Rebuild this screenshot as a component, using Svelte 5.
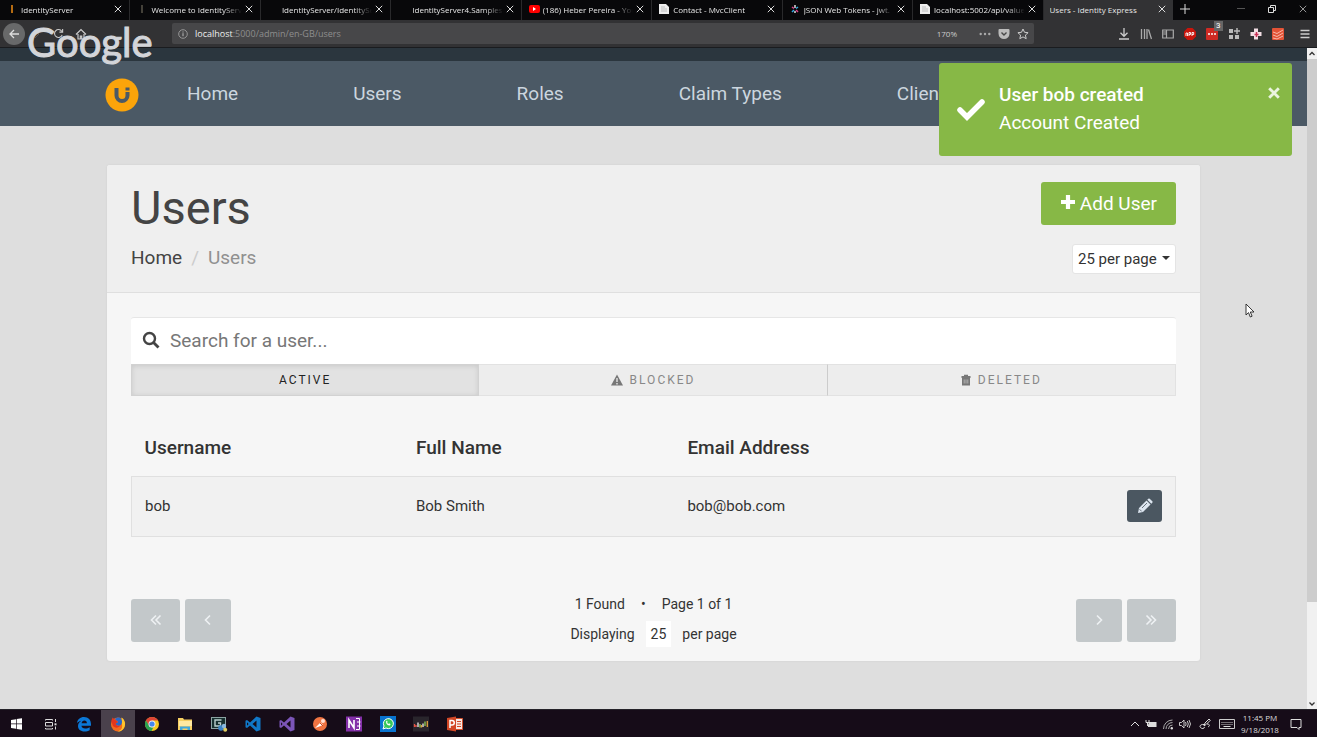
<script>
  const tabs = [
    { title: 'IdentityServer', icon: 'bar' },
    { title: 'Welcome to IdentityServ', icon: 'faint' },
    { title: 'IdentityServer/IdentitySe', icon: 'blank' },
    { title: 'IdentityServer4.Samples', icon: 'blank' },
    { title: '(186) Heber Pereira - You', icon: 'video' },
    { title: 'Contact - MvcClient', icon: 'page' },
    { title: 'JSON Web Tokens - jwt.', icon: 'jwt' },
    { title: 'localhost:5002/api/value', icon: 'page' },
    { title: 'Users - Identity Express', icon: '', active: true }
  ];
  const links = ['Home', 'Users', 'Roles', 'Claim Types', 'Clients'];
  const apps = [
    'Start', 'Task View', 'Edge', 'Firefox', 'Chrome', 'Explorer', 'Capture', 'VS Code',
    'Visual Studio', 'Postman', 'OneNote', 'WhatsApp', 'Monitor', 'PowerPoint'
  ];
  const users = [{ username: 'bob', name: 'Bob Smith', email: 'bob@bob.com' }];
  let filter = $state('active');
  let toastOpen = $state(true);
</script>

{#snippet cross(size, width)}
  <svg width={size} height={size} viewBox="0 0 10 10" aria-hidden="true">
    <path d="M1 1l8 8M9 1l-8 8" stroke="currentColor" stroke-width={width} fill="none" />
  </svg>
{/snippet}

{#snippet appIcon(name)}
  <svg width="18" height="18" viewBox="0 0 18 18" aria-hidden="true">
    {#if name === 'Start'}
      <path fill="#fff" d="M3 5l5-.8v4.4H3zM8.700 4.100L14 3.300v5.300H8.700zM3 9.300h5v4.500L3 13zM8.700 9.300H14v5.400l-5.300-.8z" />
    {:else if name === 'Task View'}
      <path d="M3.500 5.500v-1h7v1M3.500 13v1h7v-1M3.500 7.500h7v3.500h-7zM13.500 4v3M13.500 11.500v3" stroke="#ddd" fill="none" />
      <rect x="12.500" y="8.300" width="2" height="2" fill="#ddd" />
    {:else if name === 'Edge'}
      <path fill="#0b78d7" d="M2 8.200C2.400 4.300 5.200 2 9 2c4.400 0 7 3 7 7.300v1.500H6.500c.1 1.900 1.600 2.700 3.600 2.700 1.700 0 3.300-.5 4.600-1.300v3.100c-1.300.8-3.200 1.200-5.200 1.200C5.500 16.500 3 14.200 3 11c0-2.300 1.200-4.200 3.400-5.300C4.500 6 3 6.900 2 8.200zM6.600 8.200h5.300C11.900 6.400 11 5.500 9.400 5.500c-1.500 0-2.500 1-2.800 2.700z" />
    {:else if name === 'Firefox'}
      <circle cx="9" cy="9.500" r="7" fill="#f36a1c" />
      <path fill="#ffc42b" d="M12.500 2.500c3.300 2 4.300 6 3.200 9-1 3-4 5.500-7.300 5 4-1 5-3.600 4.700-6.400 0-2-.9-5-.6-7.600z" />
      <path fill="#2868c8" d="M6 4c2-2.200 5.600-2 6.500.4 1 2.200.5 5-1.500 6-2 .8-4-.2-4.400-2l2.600-1.300C8.200 6 7 5.500 6 4z" />
      <path fill="#e3361e" d="M2.200 6L3.600 2.600l2 2L9 6.900 6.700 8.500c.2 2 2.500 3 4.500 2-1.300 2.800-5.800 2.900-7.400 0z" />
    {:else if name === 'Chrome'}
      <circle cx="9" cy="9" r="7" fill="#f7c922" />
      <path fill="#de4436" d="M2.900 5.600A7 7 0 0 1 15.100 5.600H9L5.900 10.800z" />
      <path fill="#27a150" d="M2.900 5.600l3.300 5.200c1 1.400 2.700 1.900 4.200 1.400L8.500 16A7 7 0 0 1 2.900 5.600z" />
      <circle cx="9" cy="9" r="3.500" fill="#eee" /><circle cx="9" cy="9" r="2.600" fill="#4487ef" />
    {:else if name === 'Explorer'}
      <path fill="#f6cf62" d="M2 3h5l1 1.500h8V15H2z" /><path fill="#ffe9a1" d="M3 6h13v5H3z" />
      <path fill="#40a9df" d="M4 11.500h10V15h-2.500v-1.500h-5V15H4z" />
    {:else if name === 'Capture'}
      <rect x="1.500" y="2.500" width="14" height="11" fill="#17302f" stroke="#8ba3a2" />
      <path d="M11.500 5H5v6h5.500V8H8" fill="none" stroke="#bcd0cf" stroke-width="1.400" />
      <circle cx="11" cy="13" r="2.800" fill="#3b83c4" /><circle cx="14" cy="11" r="2.200" fill="#8bb9de" /><circle cx="15.200" cy="14.800" r="2" fill="#e1ce62" />
    {:else if name === 'VS Code' || name === 'Visual Studio'}
      <path fill={name === 'VS Code' ? '#1078c8' : '#7b55b8'} fill-rule="evenodd" d="M12.500 1.500L16.500 3v12l-4 1.500L6 10.500 3 13l-1.500-.8V5.800L3 5l3 2.500zM12.500 5.500L8.500 9l4 3.500zM3 7.300v3.400L4.600 9z" />
    {:else if name === 'Postman'}
      <circle cx="9" cy="9" r="7" fill="#f07442" />
      <path d="M4 13l5.500-5.500L12 10l-5 2z" fill="#fff" /><circle cx="12" cy="6" r="2" fill="#ffe0d2" /><path d="M9 8l3 3" stroke="#c64b22" />
    {:else if name === 'OneNote'}
      <rect x="1" y="1.500" width="16" height="15" fill="#832fa8" />
      <path d="M4 13V5l5 8V5" fill="none" stroke="#fff" stroke-width="1.600" /><path d="M11 3.500h3.500v11H11M12 7h3.500M12 11h3.500" stroke="#fff" fill="none" />
    {:else if name === 'WhatsApp'}
      <rect x="1" y="1" width="16" height="16" fill="#0873cf" />
      <path d="M4 14l1-3a5 5 0 1 1 2 2z" fill="#37c95a" stroke="#fff" /><path d="M7 6.500c0 2.500 1.500 4 4 4l.5-1.500-1.500-.7-.7.700-1.200-1.200.5-.8L8 5.500z" fill="#fff" />
    {:else if name === 'Monitor'}
      <rect x="1" y="1.500" width="16" height="15" fill="#29252c" />
      <path d="M2.500 9v3M4 10v2" stroke="#e65144" stroke-width="1.300" /><path d="M6 7.500v4.500M11 8.500V12" stroke="#eee" stroke-width="1.300" /><path d="M8 9v3.500M13 6.500V11" stroke="#8dcb55" stroke-width="1.300" /><path d="M9.500 10v2.500M15.300 6v6" stroke="#e0a23d" stroke-width="1.300" />
    {:else}
      <path fill="#f9e9e4" stroke="#d4502d" d="M8 3.500h8.500v11H8z" /><path fill="#d24625" d="M1 3l9-1.500v15L1 15z" />
      <path d="M4 13V5.500h2a1.800 1.800 0 0 1 0 4.500H4" stroke="#fff" stroke-width="1.500" fill="none" /><path d="M11 6.500h4M11 9h4M11 11.500h4" stroke="#d24625" />
    {/if}
  </svg>
{/snippet}

<div class="screen">
  <div class="tabbar">
    {#each tabs as tab}
      <div class="tab" class:active={tab.active}>
        {#if tab.icon}
          <svg width="12" height="12" viewBox="0 0 12 12" aria-hidden="true">
            {#if tab.icon === 'bar'}<path d="M6 2v8" stroke="#ef8c14" stroke-width="1.500" />
            {:else if tab.icon === 'faint'}<path d="M6 2v8" stroke="#59544a" stroke-width="1.500" />
            {:else if tab.icon === 'video'}<rect x="1" y="2" width="11" height="8" rx="2" fill="#f00" /><path d="M5 4l3 2-3 2z" fill="#fff" />
            {:else if tab.icon === 'page'}<path d="M1 1h7l3 3v7H1z" fill="#eee" /><path d="M3 4h4M3 6h6M3 8h6" stroke="#aaa" stroke-width=".7" />
            {:else if tab.icon === 'jwt'}<path d="M6 2v3M6 8v2" stroke="#ddd" stroke-width="1.500" /><path d="M3 4l2 1.500M7 7l2 2" stroke="#e0418a" stroke-width="1.500" /><path d="M9 4L7 5.500M5 7L3 9" stroke="#31a9e0" stroke-width="1.500" />{/if}
          </svg>
        {/if}
        <span class="tab-title">{tab.title}</span>
        <button class="bare" aria-label="Close tab">{@render cross(8, 1.2)}</button>
      </div>
    {/each}
    <div class="window-controls">
      <button class="bare" aria-label="New tab"><svg width="12" height="12" viewBox="0 0 12 12"><path d="M6 1v10M1 6h10" stroke="#ddd" /></svg></button>
      <span class="spacer"></span>
      <button class="bare" aria-label="Minimize"><svg width="8" height="8" viewBox="0 0 8 8"><path d="M0 3.500h8" stroke="#555" /></svg></button>
      <button class="bare" aria-label="Restore"><svg width="8" height="8" viewBox="0 0 8 8"><path d="M.5 2.500h5v5h-5zM2.500 2V.5h5v5H6" stroke="#ddd" fill="none" /></svg></button>
      <button class="bare" aria-label="Close window">{@render cross(8, 0.8)}</button>
    </div>
  </div>

  <div class="toolbar">
    <div class="history">
      <button class="bare back" aria-label="Back"><svg width="12" height="12" viewBox="0 0 12 12"><path d="M11 6H2M6 2L2 6l4 4" stroke="#ddd" stroke-width="1.300" fill="none" /></svg></button>
      <button class="bare" aria-label="Forward"><svg width="10" height="10" viewBox="0 0 10 10"><path d="M3 1l4 4-4 4" stroke="#555" fill="none" /></svg></button>
      <button class="bare" aria-label="Reload"><svg width="11" height="11" viewBox="0 0 12 12"><path d="M10 7.500A4.300 4.300 0 1 1 9.500 3.500M10.500 1v3.500H7" stroke="#ccc" stroke-width="1.200" fill="none" /></svg></button>
      <button class="bare" aria-label="Home page"><svg width="12" height="12" viewBox="0 0 12 12"><path d="M1 6.500L6 1.500l5 5M3 6v5h6V6M5.300 11V8h1.400v3" stroke="#ccc" stroke-width="1.200" fill="none" /></svg></button>
    </div>
    <div class="address">
      <svg width="10" height="10" viewBox="0 0 10 10" aria-hidden="true"><circle cx="5" cy="5" r="4.300" stroke="#aaa" fill="none" stroke-width=".8" /><path d="M5 4.200v3M5 2.500v1" stroke="#bbb" /></svg>
      <span class="url"><b>localhost</b>:5000/admin/en-GB/users</span>
      <span class="zoom">170%</span>
      <svg width="12" height="12" viewBox="0 0 12 12" aria-hidden="true"><g fill="#aaa"><circle cx="1.700" cy="6" r="1.200" /><circle cx="6" cy="6" r="1.200" /><circle cx="10.300" cy="6" r="1.200" /></g></svg>
      <svg width="12" height="12" viewBox="0 0 12 12" aria-hidden="true"><path fill="#bbb" d="M1.500 1h9a1 1 0 0 1 1 1v3.500a5.500 5.500 0 0 1-11 0V2a1 1 0 0 1 1-1z" /><path d="M3.500 4.500L6 7l2.500-2.500" stroke="#474747" stroke-width="1.400" fill="none" /></svg>
      <svg width="12" height="12" viewBox="0 0 12 12" aria-hidden="true"><path d="M6 1l1.500 3.300 3.600.4-2.700 2.400.8 3.600L6 8.900l-3.200 1.800.8-3.600L.9 4.700l3.600-.4z" stroke="#ccc" fill="none" /></svg>
    </div>
    <div class="extensions">
      <svg width="12" height="12" viewBox="0 0 12 12"><path d="M6 0v8M2.500 4.800L6 8.300l3.500-3.500M1 11h10" stroke="#ccc" stroke-width="1.300" fill="none" /></svg>
      <svg width="12" height="12" viewBox="0 0 12 12"><path d="M1.500 1v10M4.500 1v10M7 1v10M8.500 1.500l3 9.500" stroke="#aaa" stroke-width="1.300" /></svg>
      <svg width="12" height="12" viewBox="0 0 12 12"><path d="M.7 2h10.600v8H.7zM4.500 2v8M1.500 4H4M1.500 6H4" stroke="#aaa" stroke-width="1.200" fill="none" /></svg>
      <svg width="12" height="12" viewBox="0 0 12 12"><path fill="#c9150c" d="M3.500 0h5L12 3.500v5L8.500 12h-5L0 8.500v-5z" /><path d="M2 8V5h1.500v3M5 8V4.500h1.500v2H5M8 8V4.500h1.700v2H8" stroke="#fff" fill="none" stroke-width=".9" /></svg>
      <span class="badged">
        <svg width="12" height="12" viewBox="0 0 12 12"><rect width="12" height="12" rx="1" fill="#cf2b24" /><g fill="#fff"><circle cx="3" cy="6" r="1" /><circle cx="6" cy="6" r="1" /><circle cx="9" cy="6" r="1" /></g></svg>
        <span class="badge">3</span>
      </span>
      <svg width="12" height="12" viewBox="0 0 12 12"><path d="M1 1h4v4H1zM1 7h4v4H1zM7 7h4v4H7z" fill="#bbb" /><path d="M9 0v6M6 3h6" stroke="#bbb" stroke-width="1.400" /></svg>
      <svg width="12" height="12" viewBox="0 0 12 12"><path d="M4 .5h4V4h3.500v4H8v3.500H4V8H.5V4H4z" fill="#f3dfe5" /><path d="M6.500 4v5M4.500 6.500h4" stroke="#cb3157" stroke-width="1.500" /></svg>
      <svg width="12" height="12" viewBox="0 0 12 12"><rect width="12" height="12" rx="1" fill="#e35336" /><path d="M1 4l4 1.500L11 2M1 7l4 1.500L11 5M1 10l4 1L11 8" stroke="#fbd2c6" stroke-width=".8" fill="none" /></svg>
      <svg class="menu" width="12" height="12" viewBox="0 0 12 12"><path d="M1.500 2.500h9M1.500 6h9M1.500 9.500h9" stroke="#ccc" stroke-width="1.300" /></svg>
    </div>
    <span class="watermark">Google</span>
  </div>

  <div class="viewport">
    <div class="page">
      <div class="strip"></div>
      <nav>
        <svg class="logo" width="34" height="34" viewBox="0 0 34 34" role="img" aria-label="Identity Express">
          <circle cx="17" cy="17" r="16.500" fill="#fba40a" />
          <path d="M11.500 10v7.500a5.500 5.500 0 0 0 11 0V14" fill="none" stroke="#4b5965" stroke-width="4" />
          <rect x="20.500" y="9.500" width="4" height="3" fill="#4b5965" />
        </svg>
        {#each links as link}<a href="#{link}">{link}</a>{/each}
      </nav>

      <main>
        <header>
          <div>
            <h1>Users</h1>
            <div class="crumbs"><a href="#home">Home</a><i>/</i><span>Users</span></div>
          </div>
          <div class="actions">
            <button class="add">
              <svg width="16" height="16" viewBox="0 0 16 16" aria-hidden="true"><path d="M8 1v14M1 8h14" stroke="#fff" stroke-width="4.200" /></svg>
              Add User
            </button>
            <div class="select">
              <select aria-label="Users per page"><option>25 per page</option><option>50 per page</option></select>
              <svg width="8" height="4" viewBox="0 0 8 4" aria-hidden="true"><path d="M0 0h8L4 4z" fill="#333" /></svg>
            </div>
          </div>
        </header>

        <div class="content">
          <label class="search">
            <svg width="18" height="18" viewBox="0 0 18 18" aria-hidden="true"><circle cx="7.500" cy="7.500" r="5.500" stroke="#444" stroke-width="2.400" fill="none" /><path d="M11.500 11.500l5 5" stroke="#444" stroke-width="2.800" /></svg>
            <input type="text" placeholder="Search for a user..." aria-label="Search for a user" />
          </label>
          <div class="filters">
            <button class:on={filter === 'active'} onclick={() => (filter = 'active')}>ACTIVE</button>
            <button class:on={filter === 'blocked'} onclick={() => (filter = 'blocked')}>
              <svg width="12" height="12" viewBox="0 0 12 12" aria-hidden="true"><path d="M6 .5l6 11H0z" fill="#777" /><path d="M6 4v4M6 9v1.500" stroke="#ededed" stroke-width="1.300" /></svg>BLOCKED</button>
            <button class:on={filter === 'deleted'} onclick={() => (filter = 'deleted')}>
              <svg width="10" height="12" viewBox="0 0 10 12" aria-hidden="true"><path d="M3 2V.8h4V2h2.500v2H.5V2zM1 4h8v7.500H1z" fill="#777" /><path d="M3.200 5.500v4M5 5.500v4M6.800 5.500v4" stroke="#ccc" stroke-width=".7" /></svg>DELETED</button>
          </div>

          <table>
            <thead><tr><th>Username</th><th>Full Name</th><th>Email Address</th><th aria-label="Edit"></th></tr></thead>
            <tbody>
              {#each users as user}
                <tr>
                  <td>{user.username}</td><td>{user.name}</td><td>{user.email}</td>
                  <td><button class="edit" aria-label="Edit {user.username}">
                    <svg width="16" height="16" viewBox="0 0 16 16" aria-hidden="true"><path d="M1 15l1-5 7.500-7.500 4 4L6 14zM10.300 1.700l1-1q.7-.6 1.400 0l2.600 2.600q.6.700 0 1.400l-1 1z" fill="#dde6f0" /><path d="M2.600 11.300l2.100 2.100M5 10l5-5" stroke="#4b5761" stroke-width=".8" /></svg>
                  </button></td>
                </tr>
              {/each}
            </tbody>
          </table>

          <div class="pager">
            <div class="pages">
              <button class="wide" disabled aria-label="First page"><svg width="12" height="12" viewBox="0 0 12 12"><path d="M6 1.500L1.500 6 6 10.500M10.500 1.500L6 6l4.500 4.500" /></svg></button>
              <button disabled aria-label="Previous page"><svg width="12" height="12" viewBox="0 0 12 12"><path d="M8 1.500L3.500 6 8 10.500" /></svg></button>
            </div>
            <div class="summary">
              <div class="found"><span>1 Found</span><span>•</span><span>Page 1 of 1</span></div>
              <div class="showing"><span>Displaying</span><b>25</b><span>per page</span></div>
            </div>
            <div class="pages">
              <button disabled aria-label="Next page"><svg width="12" height="12" viewBox="0 0 12 12"><path d="M4 1.500L8.500 6 4 10.500" /></svg></button>
              <button class="wide" disabled aria-label="Last page"><svg width="12" height="12" viewBox="0 0 12 12"><path d="M1.500 1.500L6 6l-4.500 4.500M6 1.500L10.500 6 6 10.500" /></svg></button>
            </div>
          </div>
        </div>
      </main>

      {#if toastOpen}
        <div class="toast" role="status">
          <svg width="30" height="24" viewBox="0 0 30 24" aria-hidden="true"><path d="M4 13l7 7L26 5" stroke="#fff" stroke-width="5.500" stroke-linecap="round" fill="none" /></svg>
          <div class="message"><strong>User bob created</strong><span>Account Created</span></div>
          <button class="bare" aria-label="Dismiss" onclick={() => (toastOpen = false)}>{@render cross(12, 2.4)}</button>
        </div>
      {/if}
      <svg class="pointer" width="10" height="15" viewBox="0 0 10 15" aria-hidden="true"><path d="M1 1v11l2.500-2.400L5.300 14l1.800-.8L5.300 9H9z" fill="#fff" stroke="#222" stroke-width=".9" /></svg>
    </div>
    <div class="scrollbar">
      <svg width="10" height="11" viewBox="0 0 10 11"><path d="M2.500 7L5 4.500 7.500 7" stroke="#333" stroke-width="1.300" fill="none" /></svg>
      <div class="thumb"></div>
      <div class="rest"></div>
      <svg width="10" height="11" viewBox="0 0 10 11"><path d="M2.500 4.500L5 7l2.500-2.500" stroke="#333" stroke-width="1.300" fill="none" /></svg>
    </div>
  </div>

  <footer>
    <div class="apps">
      {#each apps as app}<button class="bare" class:current={app === 'Firefox'} aria-label={app}>{@render appIcon(app)}</button>{/each}
    </div>
    <div class="tray">
      <svg width="10" height="12" viewBox="0 0 10 12"><path d="M1 8l4-4 4 4" stroke="#ddd" fill="none" /></svg>
      <svg width="12" height="12" viewBox="0 0 12 12"><path d="M4 4h7.500v5H3V7" fill="#ddd" /><path d="M1 2v2.500h3V2M2.500 4.500V8" stroke="#ddd" fill="none" /></svg>
      <svg width="12" height="12" viewBox="0 0 12 12"><path d="M1.500 11A9 9 0 0 1 10.500 2M4 11a6.500 6.500 0 0 1 6.500-6.500M6.500 11a4 4 0 0 1 4-4" stroke="#aaa" fill="none" /><circle cx="9.800" cy="10.200" r="1.200" fill="#ddd" /></svg>
      <svg width="12" height="12" viewBox="0 0 12 12"><path d="M.5 4.500h2L5 2v8L2.500 7.500h-2zM6.500 4q1.200 2 0 4M8.300 3q2 3 0 6M10 2q3 4 0 8" stroke="#ddd" fill="none" stroke-width=".9" /></svg>
      <svg class="pen" width="12" height="12" viewBox="0 0 12 12"><path d="M5 8l1-3 4-4 1.300 1.300-4 4zM5 6.500C2 6 0 8 1.500 9.500S5 11 5.500 9M8 6c3 0 3 2 1 3" stroke="#ddd" fill="none" /></svg>
      <svg width="16" height="12" viewBox="0 0 16 12"><path d="M.5 1.500h15v9H.5z" stroke="#ccc" fill="none" /><path d="M2.500 4.500h11M2.500 6.500h11" stroke="#ccc" stroke-dasharray="1 1" /><path d="M4.500 8.500h7" stroke="#ddd" /></svg>
      <div class="clock"><span>11:45 PM</span><span>9/18/2018</span></div>
      <svg width="12" height="12" viewBox="0 0 12 12"><path d="M1 1.500h10v8H9v2l-2-2H1z" stroke="#ddd" fill="none" /></svg>
    </div>
  </footer>
</div>

<style>
  :global(body) { margin: 0; }
  .screen, .screen * { box-sizing: border-box; }
  .screen { min-height: 100vh; display: flex; flex-direction: column; font-family: Roboto, sans-serif; color: #333; overflow: hidden; }
  svg { display: block; flex: none; }
  button, input, select { font: inherit; color: inherit; }
  a { color: inherit; text-decoration: none; }
  .bare { border: 0; padding: 0; background: none; display: flex; align-items: center; justify-content: center; flex: none; }

  .tabbar { display: flex; height: 20px; background: #08080a; color: #e6e6e6; font: 8px "Open Sans", sans-serif; }
  .tab { flex: 1 1 0; min-width: 0; display: flex; align-items: center; gap: 3px; padding: 0 7px 2px 6px; border-right: 1px solid #29292b; }
  .tab.active { background: #323234; border: 0; }
  .tab-title { flex: 1; min-width: 0; overflow: hidden; white-space: nowrap; mask-image: linear-gradient(90deg, #000 80%, transparent); }
  .tab.active .tab-title { mask-image: none; }
  .window-controls { width: 144px; display: flex; align-items: center; gap: 23px; padding: 0 11px 3px 6px; }
  .spacer { flex: 1; }

  .toolbar { position: relative; height: 28px; display: flex; align-items: center; background: #323234; border-bottom: 1px solid #1a1c1f; }
  .history { width: 172px; display: flex; align-items: center; gap: 11px; padding-left: 3px; }
  .back { width: 22px; height: 22px; border-radius: 50%; background: #68696a; }
  .history .back + .bare { margin-left: -4px; }
  .address { flex: 1; height: 21px; display: flex; align-items: center; gap: 7px; padding: 0 5px 0 6px; background: #474749; border-radius: 2px; font: 9px "Open Sans", sans-serif; color: #8e8e8e; }
  .address b { color: #eee; font-weight: 400; }
  .url { flex: 1; }
  .zoom { color: #ccc; font-size: 8px; padding-right: 15px; }
  .extensions { width: 283px; display: flex; align-items: center; justify-content: flex-end; gap: 10px; padding-right: 6px; }
  .menu { margin-left: 5px; }
  .badged { position: relative; }
  .badge { position: absolute; left: 8px; top: -7px; padding: 0 2px; background: #666; color: #fff; font-size: 8px; line-height: 10px; }
  .watermark { position: absolute; left: 27px; top: -2px; z-index: 5; font: 40px/48px Lato, sans-serif; color: #d3d5d9; -webkit-text-stroke: 1px #d3d5d9; }

  .viewport { flex: 1; display: flex; }
  .page { position: relative; flex: 1; min-width: 0; background: #dedede; padding-bottom: 48px; }
  .strip { height: 13px; background: #2b363e; }
  nav { height: 65px; display: flex; align-items: center; gap: 115px; padding-left: 105px; background: #4b5965; color: #ccd6df; font-size: 19px; white-space: nowrap; overflow: hidden; }
  .logo { margin: 2px -67px 0 0; }

  main { margin: 39px 107px 0; background: #f6f6f6; border-radius: 3px; box-shadow: 0 0 2px #ccc; }
  header { display: flex; justify-content: space-between; padding: 17px 24px 18px; background: #efefef; border-bottom: 1px solid #dfdfdf; border-radius: 3px 3px 0 0; }
  h1 { margin: 0; font-size: 47px; line-height: 52px; font-weight: 400; color: #444; }
  .crumbs { display: flex; gap: 9px; margin-top: 12px; font-size: 19px; line-height: 24px; color: #444; }
  .crumbs i { font-style: normal; color: #ccc; }
  .crumbs span { color: #909090; }
  .actions { display: flex; flex-direction: column; align-items: flex-end; gap: 19px; }
  .add { height: 43px; padding: 0 19px; display: flex; align-items: center; gap: 4px; border: 0; border-radius: 3px; background: #87b846; color: #fff; font-size: 19px; white-space: nowrap; }
  .add svg { margin-bottom: 4px; }
  .select { display: grid; align-items: center; }
  .select > * { grid-area: 1 / 1; }
  select { appearance: none; height: 30px; padding: 0 18px 0 5px; border: 1px solid #e4e4e4; border-radius: 3px; background: #fff; font-size: 15px; }
  .select svg { justify-self: end; margin: 0 6px 3px 0; pointer-events: none; }

  .content { padding: 24px 24px 19px; }
  .search { display: flex; align-items: center; gap: 10px; height: 47px; padding: 0 11px 2px; background: #fff; border-top: 1px solid #e6e6e6; border-radius: 3px 3px 0 0; }
  .search input { flex: 1; min-width: 0; padding: 0; border: 0; outline: 0; background: none; font-size: 19px; }
  .search input::placeholder { color: #777; opacity: 1; }
  .filters { display: grid; grid-template-columns: repeat(3, 1fr); }
  .filters button { height: 32px; display: flex; align-items: center; justify-content: center; gap: 7px; border: 1px solid #e2e2e2; border-left: 0; border-right-color: #ccc; background: #ededed; font-size: 12px; letter-spacing: 2px; color: #888; }
  .filters button:last-child { border-right-color: #e2e2e2; }
  .filters .on { background: #e2e2e2; border: 1px solid #d2d2d2; color: #222; box-shadow: inset 0 1px 5px #c8c8c8; }

  table { width: 100%; margin-top: 24px; border-collapse: collapse; table-layout: fixed; font-size: 15px; }
  th { height: 56px; padding: 0 13px; text-align: left; font-size: 19px; font-weight: 500; }
  th:nth-child(-n + 2) { width: 26%; }
  th:nth-child(3) { width: 30%; }
  td { height: 60px; padding: 0 13px; }
  tbody tr { background: #f1f1f1; border: 1px solid #e0e0e0; }
  .edit { width: 35px; height: 32px; margin-left: auto; display: flex; align-items: center; justify-content: center; padding: 0; border: 0; border-radius: 3px; background: #4b5761; }

  .pager { display: flex; justify-content: space-between; align-items: flex-end; margin-top: 52px; }
  .pages { display: flex; gap: 5px; }
  .pages button { width: 46px; height: 43px; display: flex; align-items: center; justify-content: center; padding: 0; border: 0; border-radius: 3px; background: #c3c8ca; }
  .pages .wide { width: 49px; }
  .pages path { fill: none; stroke: #eef1f3; stroke-width: 1.6; }
  .summary { display: flex; flex-direction: column; align-items: center; font-size: 14px; margin-bottom: -7px; }
  .found, .showing { display: flex; align-items: center; height: 30px; }
  .found { gap: 16px; }
  .showing { gap: 11px; }
  .showing b { height: 26px; padding: 0 5px; line-height: 26px; background: #fff; font-weight: 400; }

  .toast { position: absolute; top: 15px; right: 15px; width: 353px; height: 93px; display: flex; gap: 13px; padding: 18px 12px 0 17px; background: #87b846; color: #fff; border-radius: 3px; font-size: 19px; line-height: 28px; }
  .toast > svg { margin-top: 16px; }
  .message { flex: 1; display: flex; flex-direction: column; }
  .message strong { font-weight: 500; }
  .toast .bare { height: 24px; color: #eaf4df; }
  .pointer { position: absolute; right: 52px; top: 255px; }

  .scrollbar { width: 10px; display: flex; flex-direction: column; background: #f1f1f1; }
  .thumb { flex: 543; background: #cdcdcd; }
  .rest { flex: 96; }

  footer { height: 28px; display: flex; justify-content: space-between; background: #160c18; border-top: 1px solid #252329; }
  .apps { width: 472px; display: grid; grid-template-columns: repeat(14, 1fr); }
  .current { background: #4a414c; }
  .tray { display: flex; align-items: center; gap: 5px; padding-right: 15px; color: #ddd; }
  .pen { margin: 0 3px; }
  .clock { width: 40px; margin-right: 5px; display: flex; flex-direction: column; align-items: center; font: 8px/12px "Open Sans", sans-serif; white-space: nowrap; }
</style>
